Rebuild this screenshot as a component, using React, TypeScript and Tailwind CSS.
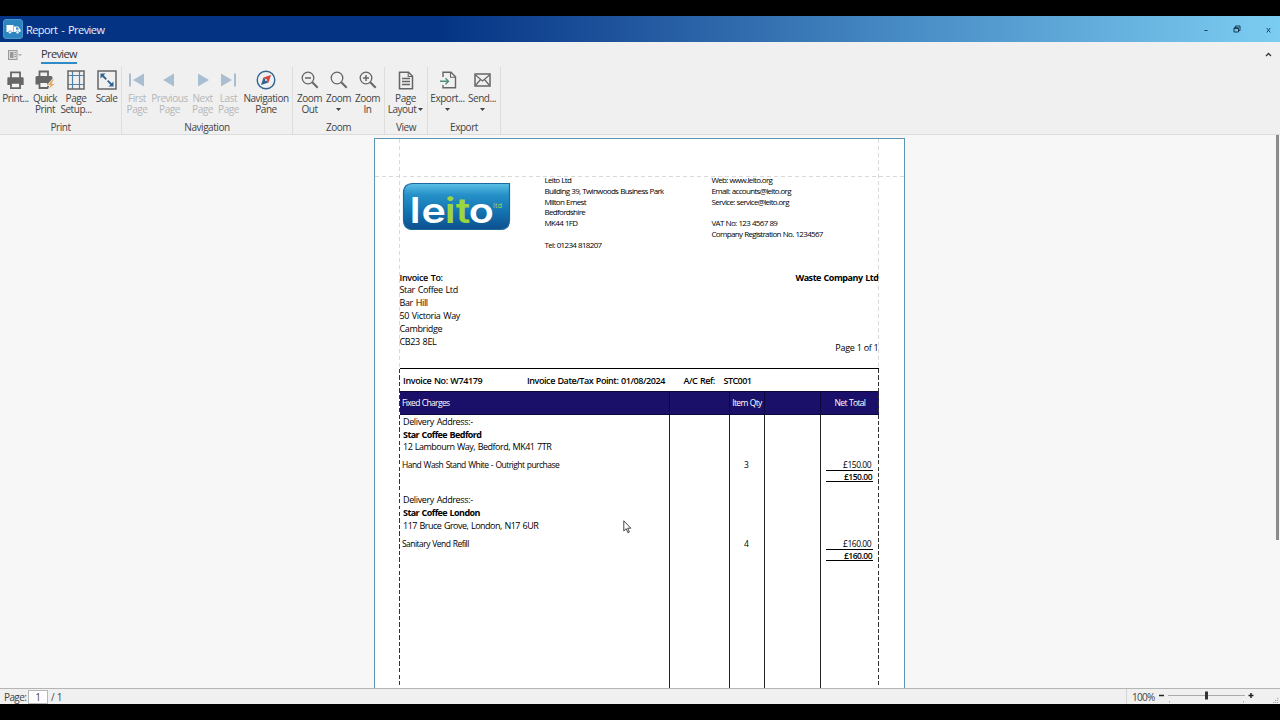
import type { ReactNode } from "react";
import clsx from "clsx";

interface RibbonButtonProps {
  icon: ReactNode;
  lines: ReactNode[];
  className: string;
  disabled?: boolean;
}

function RibbonButton({ icon, lines, className, disabled }: RibbonButtonProps) {
  return (
    <button
      type="button"
      disabled={disabled}
      className={clsx(
        "flex flex-col items-center shrink-0",
        disabled ? "text-[#b4b6b8]" : "text-[#444]",
        className
      )}
    >
      <span className="h-[26px] flex items-center justify-center">{icon}</span>
      {lines.map((line, i) => (
        <span
          key={i}
          className="h-[11px] flex items-center justify-center whitespace-nowrap text-[10px] leading-[11px] tracking-[-0.46px]"
        >
          {line}
        </span>
      ))}
    </button>
  );
}

interface RibbonGroupProps {
  label: string;
  className: string;
  children: ReactNode;
}

function RibbonGroup({ label, className, children }: RibbonGroupProps) {
  return (
    <div
      className={clsx(
        "h-[67px] shrink-0 flex flex-col justify-between border-r border-[#dedede]",
        className
      )}
    >
      <div className="flex">{children}</div>
      <div className="h-[14px] text-center text-[10px] leading-[14px] tracking-[-0.45px] text-[#444]">
        {label}
      </div>
    </div>
  );
}

function Caret() {
  return (
    <svg width="5" height="3" viewBox="0 0 5 3" className="shrink-0">
      <path d="M0 0h5L2.5 3z" fill="#444" />
    </svg>
  );
}

function PrinterIcon() {
  return (
    <svg width="19" height="19" viewBox="0 0 21 20" fill="none">
      <path d="M5.5 7V1h10v6" stroke="#666" strokeWidth="2" />
      <path d="M2.5 6.5h16q1 0 1 1V15h-4v-3h-10v3h-4V7.500q0-1 1-1z" fill="#666" />
      <path d="M5.500 12.500h10V18.500h-10z" fill="#f4f4f4" stroke="#666" strokeWidth="2" />
    </svg>
  );
}

function QuickPrintIcon() {
  return (
    <svg width="21" height="20" viewBox="0 0 21 20" fill="none">
      <path d="M4.500 6.500V1.500h8.500v5" stroke="#666" strokeWidth="1.800" />
      <path d="M2 6h14q1.500 0 1.500 1.500V13h-4v-1.500h-9V14.500H0.500V7.500Q0.500 6 2 6z" fill="#666" />
      <path d="M4.500 12h8.500v6H4.500z" fill="#f4f4f4" stroke="#666" strokeWidth="1.800" />
      <path
        d="M17.500 9l-5.500 6.500h3l-2 4.500 7.500-6.500h-3.500l2.500-4.500z"
        fill="#e3ac62"
        stroke="#f0f0f0"
        strokeWidth="0.800"
      />
    </svg>
  );
}

function PageSetupIcon() {
  return (
    <svg width="18" height="20" viewBox="0 0 18 20" fill="none">
      <path d="M5.500 1v18M12.500 1v18M1 5.500h16M1 14.500h16" stroke="#5480a5" strokeWidth="1.200" />
      <rect x="1" y="1" width="16" height="18" stroke="#666" strokeWidth="1.500" />
    </svg>
  );
}

function ScaleIcon() {
  return (
    <svg width="20" height="20" viewBox="0 0 20 20" fill="none">
      <rect x="1" y="1" width="18" height="18" stroke="#666" strokeWidth="1.500" />
      <path d="M5 5l10 10" stroke="#2f6493" strokeWidth="1.800" strokeDasharray="6 2 7" />
      <path d="M3.500 3.500h5l-5 5zM16.500 16.500h-5l5-5z" fill="#2f6493" />
    </svg>
  );
}

function ArrowIcon({ flip, bar }: { flip?: boolean; bar?: boolean }) {
  return (
    <svg
      width="15"
      height="14"
      viewBox="0 0 15 14"
      fill="#a9bfd1"
      className={clsx(flip ? "-scale-x-100" : bar && "-ml-0.5")}
    >
      {bar && <path d="M0 0.500h2v13H0z" />}
      <path d={bar ? "M15 0.500v13L4 7z" : "M12 0.500v13L1 7z"} />
    </svg>
  );
}

function CompassIcon() {
  return (
    <svg width="20" height="20" viewBox="0 0 20 20" fill="none">
      <circle cx="10" cy="10" r="8.800" stroke="#2f6493" strokeWidth="1.400" />
      <path d="M15 5L7.500 7.500l5 5z" fill="#d9453d" />
      <path d="M5 15l2.500-7.500 5 5z" fill="#2f6493" />
      <circle cx="10" cy="10" r="1" fill="#efefef" />
    </svg>
  );
}

function ZoomIcon({ mode }: { mode?: "in" | "out" }) {
  return (
    <svg width="18" height="18" viewBox="0 0 18 18" fill="none" stroke="#666">
      <circle cx="7" cy="7" r="5.800" strokeWidth="1.300" />
      <path d="M11.300 11.300L16.700 16.700" strokeWidth="2" />
      {mode && <path d="M4 7h6" strokeWidth="1.500" />}
      {mode === "in" && <path d="M7 4v6" strokeWidth="1.500" />}
    </svg>
  );
}

function LayoutIcon() {
  return (
    <svg width="16" height="19" viewBox="0 0 16 19" fill="none" stroke="#666">
      <path d="M1.500 1.200h9l4 4v12.600h-13z" strokeWidth="1.500" />
      <path d="M10.200 1.200v4.300h4.300" strokeWidth="1.100" />
      <path d="M4 7.500h8M4 10.500h8M4 13.500h8" strokeWidth="1.300" />
    </svg>
  );
}

function ExportIcon() {
  return (
    <svg width="18" height="18" viewBox="0 0 18 18" fill="none" stroke="#666">
      <path d="M4 6V1.200h8l4.500 4.500v11H4V14" strokeWidth="1.400" />
      <path d="M11.500 1.200v5h5" strokeWidth="1.100" />
      <path d="M1 10.200h8M6.500 7.200l3 3-3 3" stroke="#4d9178" strokeWidth="1.400" />
    </svg>
  );
}

function MailIcon() {
  return (
    <svg width="17" height="14" viewBox="0 0 17 14" fill="none" stroke="#666">
      <rect x="1" y="1" width="15" height="12" strokeWidth="1.500" />
      <path d="M1.500 2l7 6 7-6M1.500 12.500l5-6M15.500 12.500l-5-6" strokeWidth="1.200" />
    </svg>
  );
}

function TitleBar() {
  return (
    <header className="h-[26px] shrink-0 flex items-center bg-[linear-gradient(90deg,#043384_0,#043384_440px,#22589f_640px,#478bc4_900px,#7ccdf2_1280px)]">
      <div className="ml-[3px] w-5 h-5 rounded-[3px] bg-[#2e86c1] border border-[#4a98cb] flex items-center justify-center">
        <svg width="15" height="11" viewBox="0 0 15 11">
          <path d="M0.500 1h7v7h-7zM8 2.500h4l2.500 3V8H8z" fill="#fff" />
          <path d="M10 3.500h1.800l1.200 2h-3z" fill="#2e86c1" />
          <circle cx="4" cy="8.300" r="1.500" fill="#fff" stroke="#2e86c1" strokeWidth="0.600" />
          <circle cx="11.500" cy="8.300" r="1.500" fill="#fff" stroke="#2e86c1" strokeWidth="0.600" />
        </svg>
      </div>
      <h1 className="ml-[3px] pt-[2px] text-[11px] leading-[14px] tracking-[-0.55px] [word-spacing:1.5px] text-[#e8eef8] whitespace-nowrap">
        Report - Preview
      </h1>
      <div className="ml-auto mr-[9px] flex items-center text-[#173a55]">
        <svg width="4" height="8" viewBox="0 0 4 8" className="mr-[25px]">
          <path d="M0.500 5.500h3" stroke="currentColor" />
        </svg>
        <svg width="8" height="8" viewBox="0 0 8 8" fill="none" stroke="currentColor" className="mr-[25px]">
          <path d="M1 3h4.500v4H1zM2.500 3V1H7v4.500H5.500" strokeWidth="1" />
          <path d="M1 3.200h4.500" strokeWidth="1.400" />
        </svg>
        <svg width="5" height="8" viewBox="0 0 5 8">
          <path d="M0.700 3l3.600 4.500M4.300 3l-3.600 4.500" stroke="currentColor" strokeWidth="0.900" />
        </svg>
      </div>
    </header>
  );
}

function Ribbon() {
  return (
    <div className="h-[93px] shrink-0 bg-[#f0f0f0] border-b border-[#dcdcdc]">
      <div className="h-[25px] flex items-start">
        <svg width="14" height="10" viewBox="0 0 14 10" fill="none" className="ml-2 mt-[8px]">
          <rect x="0.500" y="0.500" width="8.500" height="9" fill="#ddd" stroke="#999" />
          <rect x="2" y="2" width="3.500" height="6" fill="#999" />
          <path d="M6.500 2.500H8M6.500 4.500H8M6.500 6.500H8" stroke="#999" />
          <path d="M10.500 4l1.500 1.500L13.500 4" stroke="#888" />
        </svg>
        <div className="ml-[19px] w-[36px] h-[22px] flex justify-center border-b-2 border-[#2e8bc8] text-[11px] leading-[24px] text-[#333] font-medium tracking-[-0.62px]">
          Preview
        </div>
        <svg width="7" height="5" viewBox="0 0 7 5" fill="none" className="ml-auto mr-2 mt-[10px]">
          <path d="M1 4l2.500-2.500L6 4" stroke="#333" strokeWidth="1.300" />
        </svg>
      </div>

      <div className="flex">
        <RibbonGroup label="Print" className="w-[122px]">
          <RibbonButton className="w-[31px]" icon={<PrinterIcon />} lines={["Print..."]} />
          <RibbonButton className="w-[28px]" icon={<QuickPrintIcon />} lines={["Quick", "Print"]} />
          <RibbonButton className="w-[34px]" icon={<PageSetupIcon />} lines={["Page", "Setup..."]} />
          <RibbonButton className="w-[27px]" icon={<ScaleIcon />} lines={["Scale"]} />
        </RibbonGroup>
        <RibbonGroup label="Navigation" className="w-[171px]">
          <RibbonButton disabled className="ml-[2px] w-[26px]" icon={<ArrowIcon bar />} lines={["First", "Page"]} />
          <RibbonButton disabled className="w-[39px]" icon={<ArrowIcon />} lines={["Previous", "Page"]} />
          <RibbonButton disabled className="w-[27px]" icon={<ArrowIcon flip />} lines={["Next", "Page"]} />
          <RibbonButton disabled className="w-[25px]" icon={<ArrowIcon flip bar />} lines={["Last", "Page"]} />
          <RibbonButton className="w-[50px]" icon={<CompassIcon />} lines={["Navigation", "Pane"]} />
        </RibbonGroup>
        <RibbonGroup label="Zoom" className="w-[92px]">
          <RibbonButton className="ml-[2px] w-[29px]" icon={<ZoomIcon mode="out" />} lines={["Zoom", "Out"]} />
          <RibbonButton className="w-[29px]" icon={<ZoomIcon />} lines={["Zoom", <Caret key="c" />]} />
          <RibbonButton className="w-[29px]" icon={<ZoomIcon mode="in" />} lines={["Zoom", "In"]} />
        </RibbonGroup>
        <RibbonGroup label="View" className="w-[43px]">
          <RibbonButton
            className="w-[41px]"
            icon={<LayoutIcon />}
            lines={[
              "Page",
              <span key="l" className="flex items-center gap-0.5">
                Layout
                <Caret />
              </span>,
            ]}
          />
        </RibbonGroup>
        <RibbonGroup label="Export" className="w-[73px]">
          <RibbonButton className="w-[39px]" icon={<ExportIcon />} lines={["Export...", <Caret key="c" />]} />
          <RibbonButton className="w-[30px]" icon={<MailIcon />} lines={["Send...", <Caret key="c" />]} />
        </RibbonGroup>
      </div>
    </div>
  );
}

function Logo() {
  return (
    <svg width="109" height="49" viewBox="0 0 109 49" className="ml-[2px] mt-[7px]">
      <defs>
        <linearGradient id="logo-bg" x1="0" y1="0" x2="0" y2="1">
          <stop offset="0" stopColor="#5cc0e6" />
          <stop offset="0.250" stopColor="#2590c8" />
          <stop offset="0.600" stopColor="#1474b2" />
          <stop offset="1" stopColor="#0d4f8e" />
        </linearGradient>
      </defs>
      <path
        d="M11 1.500h96.500V38q0 9.500-9.500 9.500H11q-9.500 0-9.500-9.500V11q0-9.500 9.500-9.500z"
        fill="url(#logo-bg)"
        stroke="#1c6a9c"
        strokeWidth="1.200"
      />
      <text
        x="6.500 16.500 36.300 45.500 56.500"
        y="41"
        transform="scale(1.180 1)"
        className="font-['Inter'] font-semibold text-[35px]"
        fill="#fff"
      >
        le<tspan fill="#9bd63c">it</tspan>o
      </text>
      <text x="91" y="26" className="text-[7px]" fill="#a6dc5a" textLength="9">
        ltd
      </text>
    </svg>
  );
}

const companyLines = [
  "Leito Ltd",
  "Building 39, Twinwoods Business Park",
  "Milton Ernest",
  "Bedfordshire",
  "MK44 1FD",
  "",
  "Tel: 01234 818207",
];

const contactLines = [
  "Web: www.leito.org",
  "Email: accounts@leito.org",
  "Service: service@leito.org",
  "",
  "VAT No: 123 4567 89",
  "Company Registration No. 1234567",
];

const customerLines = ["Star Coffee Ltd", "Bar Hill", "50 Victoria Way", "Cambridge", "CB23 8EL"];

const deliveries = [
  {
    name: "Star Coffee Bedford",
    address: "12 Lambourn Way, Bedford, MK41 7TR",
    item: "Hand Wash Stand White - Outright purchase",
    qty: 3,
    total: "£150.00",
  },
  {
    name: "Star Coffee London",
    address: "117 Bruce Grove, London, N17 6UR",
    item: "Sanitary Vend Refill",
    qty: 4,
    total: "£160.00",
  },
];

function SmallLines({ lines, className }: { lines: string[]; className: string }) {
  return (
    <div
      className={clsx(
        "text-[8px] leading-[10.8px] tracking-[-0.68px] [word-spacing:0.5px] whitespace-nowrap",
        className
      )}
    >
      {lines.map((line, i) => (
        <p key={i} className="h-[10.8px]">
          {line}
        </p>
      ))}
    </div>
  );
}

function InvoiceTable() {
  return (
    <section className="relative h-[400px] border-t border-black">
      <div className="h-[22px] pt-px flex items-center text-[9px] font-semibold whitespace-nowrap tracking-[-0.43px] [word-spacing:0.6px]">
        <span className="pl-[3px] w-[127px] tracking-[-0.37px]">Invoice No: W74179</span>
        <span className="w-[156.500px]">Invoice Date/Tax Point: 01/08/2024</span>
        <span className="w-[40px]">A/C Ref:</span>
        <span className="tracking-[-0.55px]">STC001</span>
      </div>
      <div className="grid grid-cols-[270px_60px_35px_56px_58px] h-[24px] border-y border-[#0c0838] bg-[#1b1069] text-white text-[8.500px] leading-[21px] whitespace-nowrap tracking-[-0.65px] [word-spacing:0.5px]">
        <span className="pl-[2px] border-r border-[#0c0838]">Fixed Charges</span>
        <span className="border-r border-[#0c0838]" />
        <span className="border-r border-[#0c0838] text-center">Item Qty</span>
        <span className="border-r border-[#0c0838]" />
        <span className="text-center">Net Total</span>
      </div>
      <div className="grid grid-cols-[270px_60px_35px_56px_58px] h-[353px] whitespace-nowrap">
        <div className="border-r border-[#222]">
          {deliveries.map((d) => (
            <div key={d.name} className="h-[78.5px] pt-[0.8px] text-[9px] leading-[12.8px] [word-spacing:0.7px]">
              <p className="pl-[3px] tracking-[-0.36px]">Delivery Address:-</p>
              <p className="pl-[3px] font-bold tracking-[-0.57px]">{d.name}</p>
              <p className="pl-[3px] tracking-[-0.5px]">{d.address}</p>
              <p className="pl-[2px] pt-[5px] text-[8.500px] leading-[12px] tracking-[-0.54px]">{d.item}</p>
            </div>
          ))}
        </div>
        <div className="border-r border-[#222]" />
        <div className="border-r border-[#222]">
          {deliveries.map((d) => (
            <div key={d.name} className="h-[78.5px] pt-[44.2px] pr-px text-center text-[8.500px] leading-[12px]">
              {d.qty}
            </div>
          ))}
        </div>
        <div className="border-r border-[#222]" />
        <div className="pl-[5px] pr-[6px]">
          {deliveries.map((d) => (
            <div
              key={d.name}
              className="h-[78.5px] pt-[44.2px] text-right text-[8.500px] leading-[12px] tracking-[-0.5px]"
            >
              <p className="h-[11.2px] pr-[2px]">{d.total}</p>
              <p className="h-[12px] pr-px border-y border-black font-semibold leading-[11px]">
                {d.total}
              </p>
            </div>
          ))}
        </div>
      </div>
      <div className="absolute -left-px top-0 w-px h-full bg-[repeating-linear-gradient(180deg,#333_0,#333_4px,transparent_4px,transparent_6.5px)]" />
      <div className="absolute right-0 top-0 w-px h-full bg-[repeating-linear-gradient(180deg,#333_0,#333_4px,transparent_4px,transparent_6.5px)]" />
    </section>
  );
}

function InvoicePage() {
  return (
    <article className="relative ml-[374px] w-[531px] h-[750px] bg-white border border-[#5a96b4] px-[25px] pt-[36px] text-black">
      <div className="h-[96px] flex">
        <div className="w-[144.500px] shrink-0">
          <Logo />
        </div>
        <SmallLines lines={companyLines} className="w-[167px] shrink-0" />
        <SmallLines lines={contactLines} className="flex-1" />
      </div>
      <div className="h-[97px] pt-[0.5px] -ml-[0.500px] flex justify-between text-[9px] leading-[12.9px] whitespace-nowrap">
        <div className="tracking-[-0.36px] [word-spacing:0.8px]">
          <p className="font-semibold">Invoice To:</p>
          {customerLines.map((line) => (
            <p key={line}>{line}</p>
          ))}
        </div>
        <div className="pr-[0.500px] text-right">
          <p className="font-bold tracking-[-0.46px] [word-spacing:0.7px]">Waste Company Ltd</p>
          <p className="mt-[57.500px] font-medium tracking-[-0.27px]">Page 1 of 1</p>
        </div>
      </div>
      <InvoiceTable />
      <div className="absolute left-[24px] top-0 w-px h-[229px] bg-[repeating-linear-gradient(180deg,#d9d9d9_0,#d9d9d9_4px,transparent_4px,transparent_7px)]" />
      <div className="absolute right-[25px] top-0 w-px h-[229px] bg-[repeating-linear-gradient(180deg,#d9d9d9_0,#d9d9d9_4px,transparent_4px,transparent_7px)]" />
      <div className="absolute left-0 top-[37px] h-px w-full bg-[repeating-linear-gradient(90deg,#d9d9d9_0,#d9d9d9_4px,transparent_4px,transparent_7px)]" />
    </article>
  );
}

function StatusBar() {
  return (
    <footer className="h-[16px] shrink-0 flex items-center bg-[#f0f0f0] border-t border-[#b5b5b5] text-[10px] text-[#444]">
      <span className="ml-1 w-[24px] pt-[2px] leading-[13px] tracking-[-0.6px]">Page:</span>
      <span className="w-5 h-[14px] border border-[#b8b8b8] bg-white text-center leading-[13px]">1</span>
      <span className="ml-[3px] pt-[2px] leading-[13px] tracking-[-0.3px]">/ 1</span>
      <div className="ml-auto h-full flex items-center pl-[5px] border-l border-[#d5d5d5]">
        <span className="w-[26px] pt-[2px] leading-[13px] tracking-[-0.75px]">100%</span>
        <svg width="122" height="15" viewBox="0 0 122 15" fill="none">
          <path d="M1 6.500h5" stroke="#222" strokeWidth="1.500" />
          <path d="M10 6.500h77" stroke="#aaa" />
          <rect x="47" y="2.500" width="3" height="8" fill="#333" />
          <path d="M90.500 6.500h5M93 4v5" stroke="#222" strokeWidth="1.500" />
          <path d="M11.500 12v1.500M85.500 12v1.500" stroke="#aaa" />
          <path d="M119 9.500h1.500M117 11.500h3.500M115 13.500h5.500" stroke="#aaa" strokeDasharray="1.300 0.700" />
        </svg>
      </div>
    </footer>
  );
}

export default function App() {
  return (
    <div className="relative w-[1280px] h-[720px] py-4 flex flex-col overflow-hidden bg-black font-['Open_Sans','Noto_Sans',sans-serif]">
      <TitleBar />
      <Ribbon />
      <main className="relative flex-1 min-h-0 overflow-hidden bg-[#f7f7f7] pt-[3px]">
        <InvoicePage />
        <div className="absolute right-[1px] top-0 w-[3px] h-[405px] bg-[#8c8c8c]" />
      </main>
      <StatusBar />
      <svg width="9" height="14" viewBox="0 0 9 14" className="absolute left-[623px] top-[520px]">
        <path
          d="M0.800 0.800v10.200l2.400-2.300 1.700 4 1.500-0.700-1.700-3.800h3.100z"
          fill="#fff"
          stroke="#333"
          strokeWidth="0.900"
        />
      </svg>
    </div>
  );
}
